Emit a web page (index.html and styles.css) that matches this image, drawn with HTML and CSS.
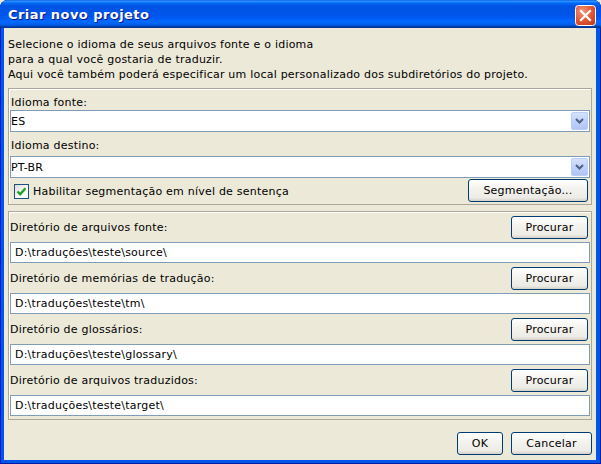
FILE: index.html
```html
<!DOCTYPE html>
<html>
<head>
<meta charset="utf-8">
<link rel="stylesheet" href="styles.css">
</head>
<body>
<div class="window">
  <div class="titlebar">
    <span class="title">Criar novo projeto</span>
    <span class="close">
      <svg width="21" height="21" viewBox="0 0 21 21">
        <defs>
          <radialGradient id="cg" cx="0.35" cy="0.3" r="0.9">
            <stop offset="0" stop-color="#f09a7e"/>
            <stop offset="0.45" stop-color="#e35d3b"/>
            <stop offset="1" stop-color="#c2351a"/>
          </radialGradient>
        </defs>
        <rect x="0.5" y="0.5" width="20" height="20" rx="3" fill="url(#cg)" stroke="#fff"/>
        <path d="M6 6 L15 15 M15 6 L6 15" stroke="#fff" stroke-width="2.2" stroke-linecap="square"/>
      </svg>
    </span>
  </div>
  <div class="body">
    <p class="intro">Selecione o idioma de seus arquivos fonte e o idioma<br>para a qual você gostaria de traduzir.<br>Aqui você também poderá especificar um local personalizado dos subdiretórios do projeto.</p>
    <div class="group lang">
      <div class="label first">Idioma fonte:</div>
      <div class="combo"><span class="value">ES</span><span class="arrow"><svg width="9" height="6" viewBox="0 0 9 6"><path d="M1 1 L4.5 4.5 L8 1" fill="none" stroke="#4d6185" stroke-width="2"/></svg></span></div>
      <div class="label second">Idioma destino:</div>
      <div class="combo"><span class="value">PT-BR</span><span class="arrow"><svg width="9" height="6" viewBox="0 0 9 6"><path d="M1 1 L4.5 4.5 L8 1" fill="none" stroke="#4d6185" stroke-width="2"/></svg></span></div>
      <div class="checkrow">
        <label class="check"><span class="box"><svg width="13" height="13" viewBox="0 0 13 13"><path d="M2.5 6.5 L5.2 9.3 L10.5 3.2" fill="none" stroke="#21a121" stroke-width="2.4"/></svg></span>Habilitar segmentação em nível de sentença</label>
        <button class="btn seg">Segmentação...</button>
      </div>
    </div>
    <div class="group dirs">
      <div class="dir">
        <div class="dirrow"><span class="dirlabel">Diretório de arquivos fonte:</span><button class="btn browse">Procurar</button></div>
        <div class="field">D:\traduções\teste\source\</div>
      </div>
      <div class="dir">
        <div class="dirrow"><span class="dirlabel">Diretório de memórias de tradução:</span><button class="btn browse">Procurar</button></div>
        <div class="field">D:\traduções\teste\tm\</div>
      </div>
      <div class="dir">
        <div class="dirrow"><span class="dirlabel">Diretório de glossários:</span><button class="btn browse">Procurar</button></div>
        <div class="field">D:\traduções\teste\glossary\</div>
      </div>
      <div class="dir">
        <div class="dirrow"><span class="dirlabel">Diretório de arquivos traduzidos:</span><button class="btn browse">Procurar</button></div>
        <div class="field">D:\traduções\teste\target\</div>
      </div>
    </div>
    <div class="footer">
      <button class="btn ok">OK</button>
      <button class="btn cancel">Cancelar</button>
    </div>
  </div>
</div>
</body>
</html>
```

FILE: styles.css
```css
html, body {
  margin: 0;
  padding: 0;
  width: 601px;
  height: 464px;
  overflow: hidden;
  background: #ece9d8;
}

.window {
  box-sizing: border-box;
  width: 601px;
  height: 464px;
  display: flex;
  flex-direction: column;
  background: #0055ea;
  border-radius: 8px 8px 0 0;
  box-shadow: inset 1px 0 0 #0019cf, inset -1px 0 0 #001ea0, inset 0 -1px 0 #001ea0;
  font-family: "DejaVu Sans", sans-serif;
  font-size: 11px;
  letter-spacing: 0.22px;
  color: #000;
}

.titlebar {
  height: 28px;
  flex: none;
  display: flex;
  align-items: center;
  padding: 0 5px 0 8px;
  border-radius: 8px 8px 0 0;
  background: linear-gradient(to bottom, #0058ee 0%, #3593ff 4%, #288eff 6%, #127dff 8%, #036ffc 10%, #0262ee 14%, #0057e5 20%, #0054e3 24%, #0055eb 56%, #005bf5 66%, #026afe 76%, #0062ef 86%, #0052d6 92%, #0040ab 94%, #003092 100%);
}

.title {
  flex: 1;
  color: #fff;
  font-family: "DejaVu Sans", sans-serif;
  font-weight: bold;
  font-size: 13px;
  letter-spacing: 0.45px;
  text-shadow: 1px 1px 0 #0a1883;
  padding-top: 1px;
}

.close {
  width: 21px;
  height: 21px;
  display: block;
  margin-top: 2px;
}

.close svg {
  display: block;
}

.body {
  flex: 1;
  margin: 0 5px 4px 4px;
  background: #ece9d8;
  padding: 0 4px;
  display: flex;
  flex-direction: column;
}

.intro {
  margin: 0;
  padding-top: 9px;
  line-height: 15px;
}

.group {
  box-sizing: border-box;
  border: 1px solid #aca899;
  box-shadow: inset 1px 1px 0 #fff;
  padding: 0 1px;
  display: flex;
  flex-direction: column;
}

.lang {
  margin-top: 6px;
}

.label {
  box-sizing: border-box;
  line-height: 15px;
  padding-left: 1px;
}

.label.first {
  height: 21px;
  padding-top: 6px;
}

.label.second {
  height: 24px;
  padding-top: 6px;
}

.combo {
  box-sizing: border-box;
  height: 22px;
  border: 1px solid #7f9db9;
  background: #fff;
  display: flex;
  align-items: center;
}

.combo .value {
  flex: 1;
  padding-left: 0;
}

.arrow {
  width: 17px;
  height: 18px;
  margin-right: 1px;
  box-sizing: border-box;
  border: 1px solid #b9cdf7;
  border-radius: 2px;
  background: linear-gradient(to bottom, #d6e2fc 0%, #c0d2fa 50%, #b1c6f6 100%);
  display: flex;
  align-items: center;
  justify-content: center;
}

.arrow svg {
  display: block;
}

.checkrow {
  height: 26px;
  display: flex;
  align-items: flex-start;
}

.check {
  display: flex;
  align-items: center;
  height: 15px;
  margin-top: 6px;
  margin-left: 4px;
}

.box {
  box-sizing: border-box;
  width: 15px;
  height: 15px;
  border: 1px solid #1c5180;
  background: linear-gradient(135deg, #dcdcd7 0%, #fff 70%);
  margin-right: 4px;
  display: flex;
  align-items: center;
  justify-content: center;
}

.box svg {
  display: block;
}

.btn {
  box-sizing: border-box;
  height: 23px;
  border: 1px solid #003c74;
  border-radius: 3px;
  background: linear-gradient(to bottom, #ffffff 0%, #f4f3ee 40%, #ecebe6 85%, #d6d0c5 100%);
  font: inherit;
  letter-spacing: inherit;
  color: #000;
  padding: 0;
  margin: 0;
}

.seg {
  width: 120px;
  margin-left: auto;
  margin-top: 1px;
  margin-right: 2px;
}

.dirs {
  margin-top: 6px;
  padding-bottom: 3px;
}

.dir {
  padding-top: 4px;
  display: flex;
  flex-direction: column;
}

.dirrow {
  height: 23px;
  display: flex;
  align-items: center;
}

.dirlabel {
  flex: 1;
}

.browse {
  width: 77px;
  margin-right: 2px;
}

.field {
  box-sizing: border-box;
  height: 21px;
  margin-top: 3px;
  border: 1px solid #7f9db9;
  background: #fff;
  padding-left: 4px;
  line-height: 19px;
}

.footer {
  margin-top: 12px;
  display: flex;
  justify-content: flex-end;
  gap: 8px;
}

.ok {
  width: 46px;
}

.cancel {
  width: 81px;
}
```
